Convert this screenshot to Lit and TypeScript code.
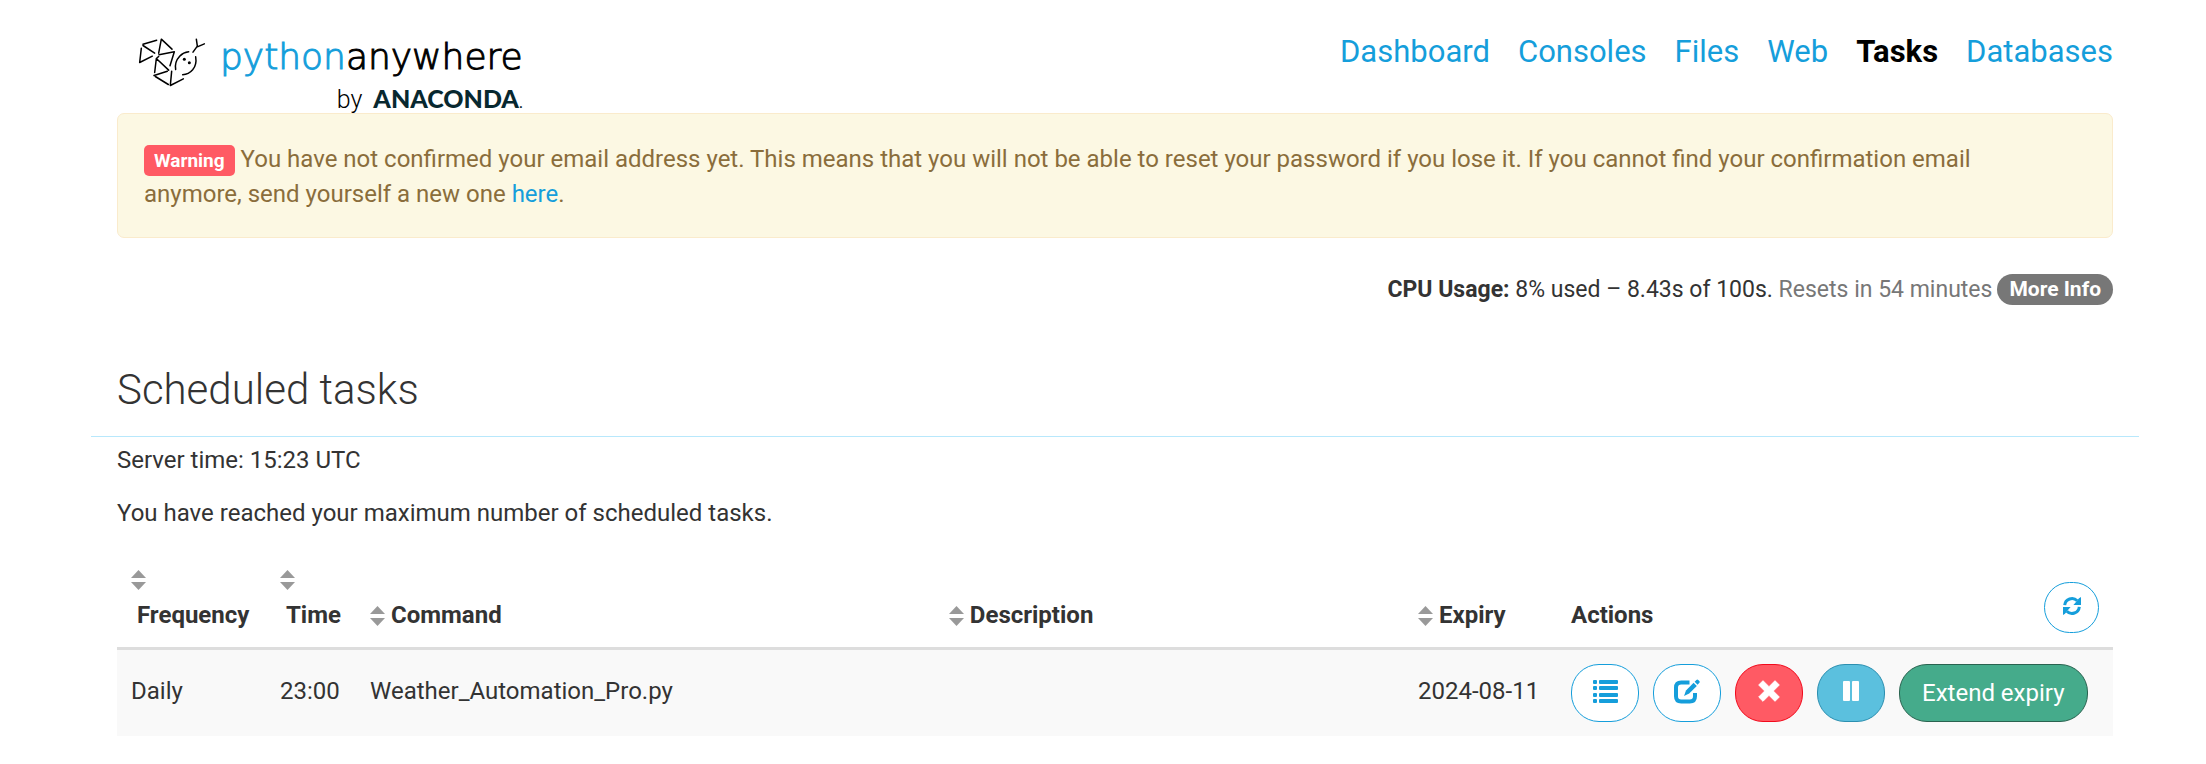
import { LitElement, html, css, svg } from "lit";
import { customElement, property } from "lit/decorators.js";

interface Task {
  frequency: string;
  time: string;
  command: string;
  description: string;
  expiry: string;
}

const listIcon = svg`<svg class="icon" viewBox="0 0 25 23" width="25" height="23" aria-hidden="true">
  <g fill="currentColor">
    <rect x="0" y="0" width="4" height="4" rx="1"/><rect x="6" y="0" width="19" height="4" rx="1"/>
    <rect x="0" y="6" width="4" height="4" rx="1"/><rect x="6" y="6" width="19" height="4" rx="1"/>
    <rect x="0" y="13" width="4" height="4" rx="1"/><rect x="6" y="13" width="19" height="4" rx="1"/>
    <rect x="0" y="19" width="4" height="4" rx="1"/><rect x="6" y="19" width="19" height="4" rx="1"/>
  </g></svg>`;

const editIcon = svg`<svg class="icon" viewBox="0 0 26 25" width="26" height="25" aria-hidden="true">
  <path d="M15.500 3.400H7.200Q2 3.400 2 8.600v8.600Q2 22.400 7.200 22.400h8.600q5.200 0 5.200-5.200v-3.200" fill="none" stroke="currentColor" stroke-width="4"/>
  <path d="M10 17l2-5.600 7.600-7.600 3.200 3.200-7.600 7.600z" fill="currentColor"/>
  <path d="M20.600 2.800l1.800-1.900q.900-.900 1.800 0l1.100 1.100q.900.900 0 1.800l-1.700 2z" fill="currentColor"/></svg>`;

const crossIcon = svg`<svg class="icon" viewBox="0 0 22 22" width="22" height="22" aria-hidden="true">
  <path d="M5 .7L11 6.700 17 .7 21.300 5 15.300 11 21.300 17 17 21.300 11 15.300 5 21.300.7 17 6.700 11 .7 5z" fill="currentColor" stroke="currentColor" stroke-linejoin="round"/></svg>`;

const pauseIcon = svg`<svg class="icon" viewBox="0 0 16 20" width="16" height="20" aria-hidden="true">
  <rect x="0" y="0" width="7" height="20" rx="1" fill="currentColor"/><rect x="9" y="0" width="7" height="20" rx="1" fill="currentColor"/></svg>`;

const refreshIcon = svg`<svg class="icon" viewBox="0 0 20 20" width="20" height="20" aria-hidden="true">
  <g><path d="M2.700 9.200A7.300 7.300 0 0 1 15.200 4.800" fill="none" stroke="currentColor" stroke-width="3"/>
  <path d="M19 1v8h-7.600l2.400-2.700 3.200-4z" fill="currentColor"/></g>
  <g transform="rotate(180 10 10)"><path d="M2.700 9.200A7.300 7.300 0 0 1 15.200 4.800" fill="none" stroke="currentColor" stroke-width="3"/>
  <path d="M19 1v8h-7.600l2.400-2.700 3.200-4z" fill="currentColor"/></g></svg>`;

const sortIcon = svg`<svg class="sort" viewBox="0 0 15 20" width="15" height="20" aria-hidden="true">
  <path d="M0 8L7.500 0 15 8zM0 12h15L7.500 20z" fill="#999"/></svg>`;

@customElement("pa-logo")
export class PaLogo extends LitElement {
  static styles = css`
    :host { display: block; }
    .brand { display: grid; grid-template-columns: auto auto; column-gap: 14px; width: max-content; color: #000; text-decoration: none; }
    .snake { display: block; margin-top: 4px; }
    .word { font: 200 36px/48px "DejaVu Sans", sans-serif; -webkit-text-stroke: 1px currentColor; }
    .python { color: #159edb; }
    .by { grid-column: 1 / -1; justify-self: end; display: flex; align-items: baseline; gap: 11px; font: 300 25px/28px Roboto, sans-serif; margin-top: -4px; }
    .anaconda { font: 900 25px/28px Lato, sans-serif; color: #08282f; }
    .dot { font-size: 16px; font-weight: 400; }
  `;
  render() {
    return html`<a class="brand" href="#">
      <svg class="snake" viewBox="24 22 204 152" width="68" height="51" aria-hidden="true">
        <g fill="none" stroke="#000" stroke-width="4.500" stroke-linecap="round" stroke-linejoin="round">
          <path d="M39 43L80 31M39 47L74 70M34 55L29 98L67 79"/>
          <path d="M86 70L94 28L126 58M87 75L133 66L120 108"/>
          <path d="M74 128L79 86L116 121M81 84L86 80M72 137L112 124M76 140L115 164M125 124L121 167L160 147"/>
          <path d="M137 119Q133 96 149 79Q160 68 176 66M197 81Q201 104 188 120Q176 134 158 135"/>
          <path d="M189 67L202 49L199 28M202 51L223 42"/>
        </g>
        <circle cx="163" cy="88" r="4.500"/><circle cx="178" cy="99" r="4.500"/>
      </svg>
      <span class="word"><span class="python">python</span>anywhere</span>
      <span class="by">by <span class="anaconda">ANACONDA<span class="dot">.</span></span></span>
    </a>`;
  }
}

@customElement("task-table")
export class TaskTable extends LitElement {
  @property({ attribute: false }) tasks: Task[] = [];

  static styles = css`
    :host { display: block; }
    table { width: 100%; table-layout: fixed; border-collapse: collapse; }
    .frequency { width: 149px; }
    .time { width: 90px; }
    .command { width: 29%; }
    .expiry { width: 153px; }
    .actions { width: 443px; }
    .reload { width: 113px; }
    th, td { box-sizing: border-box; text-align: left; padding: 14px; line-height: 35px; }
    th { vertical-align: bottom; font-weight: 700; border-bottom: 3px solid #ddd; padding-right: 0; }
    td { vertical-align: top; background: #f9f9f9; white-space: nowrap; }
    td.plain { padding-top: 24px; padding-right: 0; }
    .head { display: flex; align-items: center; gap: 6px; }
    .head.stacked { display: grid; justify-items: start; gap: 0; }
    .stacked .sort { margin: 7px 0 8px; }
    .stacked .label { padding-left: 6px; }
    th.end { text-align: right; padding-right: 14px; }
    .row { display: flex; gap: 14px; }
    button { box-sizing: border-box; display: inline-flex; align-items: center; justify-content: center; padding: 0 20px; height: 58px; min-width: 68px; border: 1px solid #159edb; border-radius: 28px; background: #fff; color: #159edb; font: inherit; cursor: pointer; }
    .icon { display: block; margin-bottom: 4px; }
    .delete { background: #ff5a64; border-color: #f20a1c; color: #fff; }
    .pause { background: #5bc0de; border-color: #2c8fb0; color: #fff; }
    .extend { padding: 0 22px; background: #45ab8b; border-color: #2a6350; color: #fff; }
    .refresh { height: 51px; min-width: 55px; padding: 0; border-radius: 26px; vertical-align: bottom; }
  `;

  render() {
    return html`<table>
      <colgroup>
        <col class="frequency"><col class="time"><col class="command"><col><col class="expiry"><col class="actions"><col class="reload">
      </colgroup>
      <thead><tr>
        <th scope="col"><span class="head stacked">${sortIcon}<span class="label">Frequency</span></span></th>
        <th scope="col"><span class="head stacked">${sortIcon}<span class="label">Time</span></span></th>
        <th scope="col"><span class="head">${sortIcon}Command</span></th>
        <th scope="col"><span class="head">${sortIcon}Description</span></th>
        <th scope="col"><span class="head">${sortIcon}Expiry</span></th>
        <th scope="col">Actions</th>
        <th class="end"><button class="refresh" aria-label="Refresh">${refreshIcon}</button></th>
      </tr></thead>
      <tbody>${this.tasks.map((t) => html`<tr>
        <td class="plain">${t.frequency}</td>
        <td class="plain">${t.time}</td>
        <td class="plain">${t.command}</td>
        <td class="plain">${t.description}</td>
        <td class="plain">${t.expiry}</td>
        <td colspan="2"><div class="row">
          <button aria-label="Log">${listIcon}</button>
          <button aria-label="Edit">${editIcon}</button>
          <button class="delete" aria-label="Delete">${crossIcon}</button>
          <button class="pause" aria-label="Pause">${pauseIcon}</button>
          <button class="extend">Extend expiry</button>
        </div></td>
      </tr>`)}</tbody>
    </table>`;
  }
}

@customElement("app-root")
export class AppRoot extends LitElement {
  static styles = css`
    :host { display: block; min-height: 100vh; background: #fff; color: #333; font: 400 24px/35px Roboto, sans-serif; }
    a { color: #159edb; text-decoration: none; }
    .page { padding: 0 93px 27px 117px; }
    .top { display: flex; justify-content: space-between; align-items: flex-start; height: 113px; }
    .logo { padding: 33px 0 0 21px; }
    nav { display: flex; gap: 28px; padding-top: 30px; font-size: 31px; line-height: 44px; }
    nav a[aria-current] { color: #000; font-weight: 700; }
    .alert { position: relative; box-sizing: border-box; padding: 28px 56px 25px 26px; background: #fcf8e3; border: 1px solid #faebcc; border-radius: 7px; color: #8a6d3b; }
    .tag { display: inline-block; padding: 0 10px; border-radius: 5px; background: #ff5a64; color: #fff; font-size: 19px; font-weight: 700; line-height: 31px; }
    .usage { display: flex; justify-content: flex-end; align-items: center; gap: 5px; margin-top: 34px; font-size: 23px; line-height: 35px; }
    .muted { color: #777; }
    .more { padding: 0 12px; border-radius: 16px; background: #777; color: #fff; font-size: 21px; font-weight: 700; line-height: 31px; }
    h1 { margin: 60px -26px 6px; padding: 0 26px 23px; border-bottom: 1px solid #b8e8fc; font-size: 42px; font-weight: 300; line-height: 46px; }
    p { margin: 0 0 18px; }
  `;

  private sections = ["Dashboard", "Consoles", "Files", "Web", "Tasks", "Databases"];
  private tasks: Task[] = [
    { frequency: "Daily", time: "23:00", command: "Weather_Automation_Pro.py", description: "", expiry: "2024-08-11" },
  ];

  render() {
    return html`<div class="page">
      <header class="top">
        <pa-logo class="logo"></pa-logo>
        <nav>${this.sections.map((s) => s === "Tasks" ? html`<a href="#" aria-current="page">${s}</a>` : html`<a href="#">${s}</a>`)}</nav>
      </header>
      <main>
        <div class="alert" role="alert"><span class="tag">Warning</span> You have not confirmed your email address yet. This means that you will not be able to reset your password if you lose it. If you cannot find your confirmation email anymore, send yourself a new one <a href="#">here</a>.</div>
        <div class="usage"><span><b>CPU Usage:</b> 8% used – 8.43s of 100s. <span class="muted">Resets in 54 minutes</span></span><a class="more" href="#">More Info</a></div>
        <h1>Scheduled tasks</h1>
        <p>Server time: 15:23 UTC</p>
        <p>You have reached your maximum number of scheduled tasks.</p>
        <task-table .tasks=${this.tasks}></task-table>
      </main>
    </div>`;
  }
}
